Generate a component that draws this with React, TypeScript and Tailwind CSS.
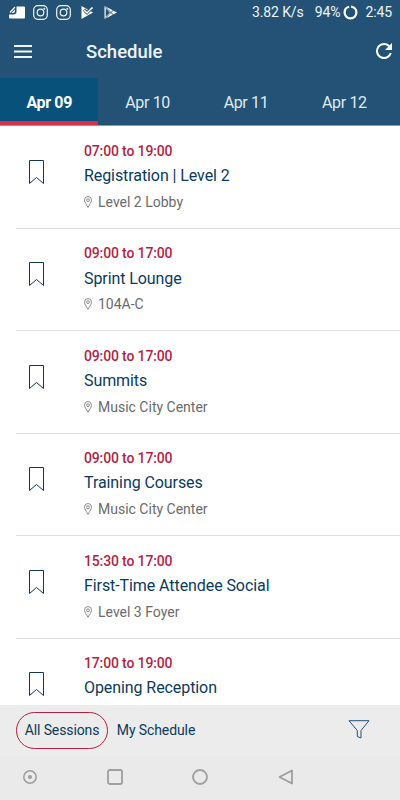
import React, { useState } from 'react';

const days = ['Apr 09', 'Apr 10', 'Apr 11', 'Apr 12'];

const sessions = [
  { time: '07:00 to 19:00', title: 'Registration | Level 2', location: 'Level 2 Lobby' },
  { time: '09:00 to 17:00', title: 'Sprint Lounge', location: '104A-C' },
  { time: '09:00 to 17:00', title: 'Summits', location: 'Music City Center' },
  { time: '09:00 to 17:00', title: 'Training Courses', location: 'Music City Center' },
  { time: '15:30 to 17:00', title: 'First-Time Attendee Social', location: 'Level 3 Foyer' },
  { time: '17:00 to 19:00', title: 'Opening Reception' },
];

function InstagramIcon() {
  return (
    <svg width="15" height="15" viewBox="0 0 15 15" fill="none" stroke="#eef4f8" strokeWidth="1.2">
      <rect x="0.7" y="0.7" width="13.6" height="13.6" rx="4" />
      <circle cx="7.5" cy="7.5" r="3.3" />
      <circle cx="11.3" cy="3.7" r="0.4" />
    </svg>
  );
}

function StatusBar() {
  return (
    <div className="flex h-6 items-center justify-between pl-[9px] pr-2 text-sm tracking-[-0.1px] text-[#eef4f8]">
      <div className="flex items-center">
        <svg width="16" height="13" viewBox="0 0 16 13">
          <path d="M7.5 0.500H15q1 0 1 1v10q0 1-1 1H1q-1 0-1-1V8.500h4.500q3 0 3-3z" fill="#fff" />
          <path d="M1 6.500L6 1" stroke="#fff" strokeWidth="1.200" />
          <path d="M2.500 7L6 3.500V5q0 2-2 2z" fill="#fff" />
        </svg>
        <span className="ml-2"><InstagramIcon /></span>
        <span className="ml-2"><InstagramIcon /></span>
        <svg className="ml-[9px]" width="15" height="15" viewBox="0 0 15 15">
          <path d="M1.500 1L13 7.500 1.500 14z" fill="#fff" />
          <path d="M4 4.500L7 7.500l6-6" fill="none" stroke="#245276" strokeWidth="3" />
          <path d="M4 5l3 3 5.500-5.500" fill="none" stroke="#fff" strokeWidth="1.700" />
          <path d="M4 6.500l3 3 5-5" fill="none" stroke="#245276" strokeWidth="0.900" />
        </svg>
        <svg className="ml-2" width="15" height="15" viewBox="0 0 15 15">
          <path d="M1.500 1L14 7.500 1.500 14z" fill="#fff" />
          <path d="M2.700 3.200V11.800L6.800 7.500z" fill="#245276" />
          <path d="M2 1.500l9 9M2 13.500l9-9" stroke="#245276" strokeWidth="0.900" />
        </svg>
      </div>
      <div className="flex items-center">
        <span>3.82 K/s</span>
        <span className="ml-[11px]">94%</span>
        <svg className="mt-px ml-[3px]" width="15" height="15" viewBox="0 0 15 15" fill="none" stroke="#fff" strokeWidth="2.200">
          <circle cx="7.500" cy="7.500" r="5.900" strokeDasharray="35 2.070" strokeDashoffset="9.300" />
        </svg>
        <span className="ml-[7px]">2:45</span>
      </div>
    </div>
  );
}

function BookmarkIcon() {
  return (
    <svg width="15" height="25" viewBox="0 0 15 25" fill="none" stroke="#12375a" strokeWidth="1">
      <path d="M0.500 0.500H14.500V23.500L7.500 17.500 0.500 23.500z" />
    </svg>
  );
}

function PinIcon() {
  return (
    <svg width="8" height="12" viewBox="0 0 8 12" fill="none" stroke="#707070" strokeWidth="0.800">
      <path d="M4 11.300C3 9 0.500 6.700 0.500 4.200a3.500 3.700 0 0 1 7 0C7.500 6.700 5 9 4 11.300z" />
      <circle cx="4" cy="4.200" r="1.400" />
    </svg>
  );
}

export default function App() {
  const [activeDay, setActiveDay] = useState('Apr 09');
  const [view, setView] = useState('all');

  return (
    <div className="flex h-[800px] w-[400px] flex-col overflow-hidden bg-white font-[Roboto,sans-serif]">
      <header className="h-[126px] shrink-0 border-b border-[#7e9fb5] bg-[#245276]">
        <StatusBar />
        <div className="flex h-[54px] items-center pl-3.5 pr-2">
          <button aria-label="Menu">
            <svg width="18" height="13" viewBox="0 0 18 13" fill="#eef6fa">
              <path d="M0 0h18v2H0zM0 5.500h18v2H0zM0 11h18v2H0z" />
            </svg>
          </button>
          <h1 className="ml-[54px] flex-1 pt-[3px] text-[18.500px] font-medium text-[#eef6fa]">Schedule</h1>
          <button aria-label="Refresh">
            <svg width="16" height="16" viewBox="4 4 16 16" fill="#fff">
              <path d="M17.650 6.350A7.958 7.958 0 0 0 12 4a8 8 0 1 0 7.730 10h-2.080A6 6 0 1 1 12 6c1.660 0 3.140.690 4.220 1.780L13 11h7V4l-2.350 2.350z" />
            </svg>
          </button>
        </div>
        <nav className="flex h-[47px]">
          {days.map((day) => (
            <button
              key={day}
              onClick={() => setActiveDay(day)}
              className={`w-[98.400px] shrink-0 border-b-4 pt-[6px] text-base tracking-[-0.35px] ${
                day === activeDay
                  ? 'border-[#d8304f] bg-[#08517b] font-bold text-white'
                  : 'border-transparent text-[#dfeaf2]'
              }`}
            >
              {day}
            </button>
          ))}
        </nav>
      </header>

      <main className="min-h-0 flex-1 overflow-hidden pt-[0.600px] pl-4">
        {sessions.map((session) => (
          <div key={session.title} className="flex h-[102.400px] border-b border-[#dedede] pl-[13px]">
            <button aria-label="Bookmark" className="mt-[33.500px] h-[25px] w-[15px]">
              <BookmarkIcon />
            </button>
            <div className="ml-10 pt-[14.400px]">
              <p className="text-sm leading-5 font-medium tracking-[-0.15px] text-[#b51f42]">{session.time}</p>
              <h2 className="mt-[3.200px] text-base leading-6 tracking-[-0.08px] text-[#0b3a5d]">{session.title}</h2>
              {session.location && (
                <p className="mt-[3.800px] flex items-center gap-[6px] text-sm leading-5 text-[#6b6b6b]">
                  <PinIcon />
                  {session.location}
                </p>
              )}
            </div>
          </div>
        ))}
      </main>

      <div className="flex h-[51px] shrink-0 items-center bg-[#ececec] pb-px pl-4 pr-[30px] text-sm tracking-[-0.1px] text-[#0b3a5d]">
        <button
          onClick={() => setView('all')}
          className={`h-[37px] w-[92px] rounded-full border ${view === 'all' ? 'border-[#b51f42]' : 'border-transparent'}`}
        >
          All Sessions
        </button>
        <button
          onClick={() => setView('mine')}
          className={`h-[37px] w-[96px] rounded-full border ${view === 'mine' ? 'border-[#b51f42]' : 'border-transparent'}`}
        >
          My Schedule
        </button>
        <button className="mb-[2px] ml-auto" aria-label="Filter">
          <svg width="22" height="19" viewBox="0 0 22 19" fill="none" stroke="#24527a" strokeWidth="1">
            <path d="M1 0.700H21L13 10.500V18L9.300 16.500V10.500z" />
          </svg>
        </button>
      </div>

      <footer className="flex h-11 shrink-0 items-center bg-[#eaeaea] px-[22px] pb-[3px]">
        <svg width="16" height="16" viewBox="0 0 16 16" fill="none" stroke="#9e9e9e" strokeWidth="1.500">
          <circle cx="8" cy="8" r="6.200" />
          <circle cx="8" cy="8" r="2" fill="#9e9e9e" stroke="none" />
        </svg>
        <svg className="ml-[69px]" width="16" height="16" viewBox="0 0 16 16" fill="none" stroke="#9e9e9e" strokeWidth="1.800">
          <rect x="1" y="1" width="14" height="14" rx="1.800" />
        </svg>
        <svg className="ml-[69px]" width="16" height="16" viewBox="0 0 16 16" fill="none" stroke="#9e9e9e" strokeWidth="1.800">
          <circle cx="8" cy="8" r="7" />
        </svg>
        <svg className="ml-[70px]" width="16" height="16" viewBox="0 0 16 16" fill="none" stroke="#9e9e9e" strokeWidth="1.800" strokeLinejoin="round">
          <path d="M14 1.500V14.500L1.500 8z" />
        </svg>
      </footer>
    </div>
  );
}
